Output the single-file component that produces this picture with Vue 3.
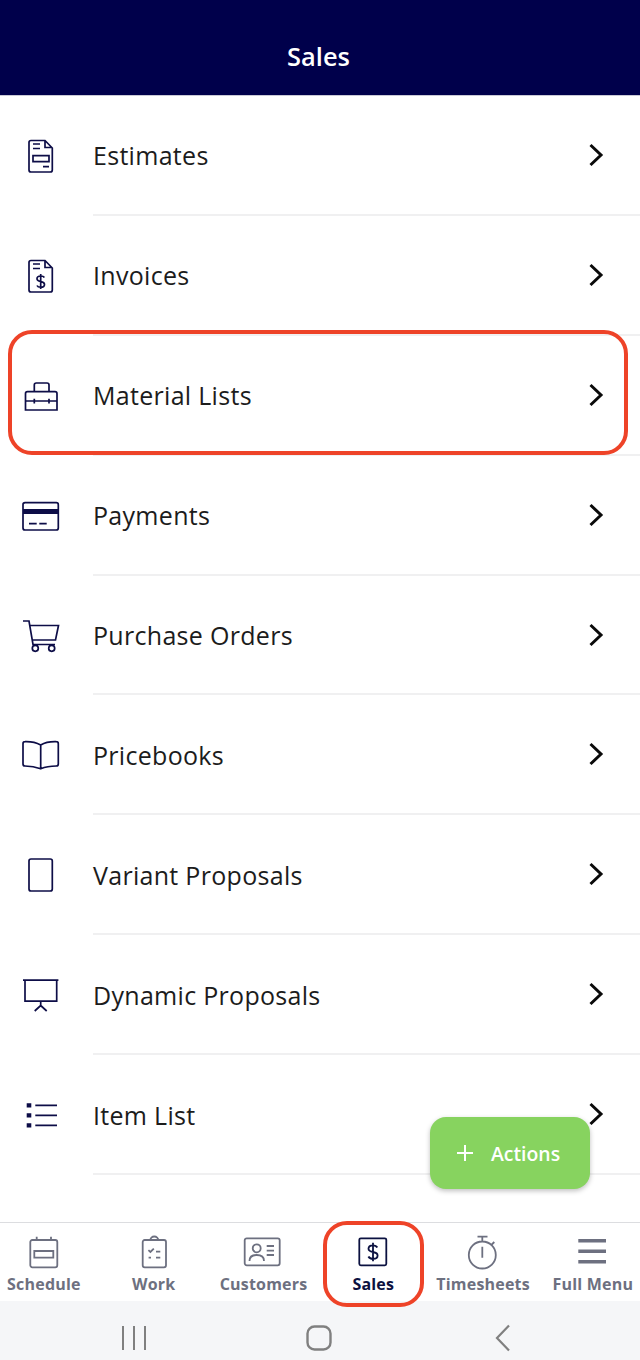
<script setup>
const rows = [
  { label: 'Estimates', d: 'M10 4.5H24L31.3 12V34a2 2 0 0 1-2 2H10a2 2 0 0 1-2-2V6.5a2 2 0 0 1 2-2zM24 4.5V11.5H31.3M12 8H19M12 12.5H19M12 19.7H28V25.7H12zM22 30.7H28' },
  { label: 'Invoices', d: 'M10 4.5H24L31.3 12V34a2 2 0 0 1-2 2H10a2 2 0 0 1-2-2V6.5a2 2 0 0 1 2-2zM24 4.5V11.5H31.3M12 8H19M12 12.5H19M23.4 21.5C22.8 20.5 21.5 20 19.7 20C17.5 20 16 21 16 22.8C16 24.6 17.6 25.2 19.7 25.6C21.9 26 23.5 26.6 23.5 28.4C23.5 30.2 22 31.2 19.7 31.2C17.8 31.2 16.5 30.6 16 29.5M19.7 18V33' },
  { label: 'Material Lists', d: 'M6.5 15.7H34a2 2 0 0 1 2 2V34H4.5V17.7a2 2 0 0 1 2-2zM13.3 15.7V9a2 2 0 0 1 2-2H26a2 2 0 0 1 2 2V15.7M4.5 25H36M13.3 22.7V27.5M28 22.7V27.5' },
  { label: 'Payments', d: 'M4 6.7H35.3a2 2 0 0 1 2 2V32a2 2 0 0 1-2 2H4a2 2 0 0 1-2-2V8.7a2 2 0 0 1 2-2zM8 27.7H15.7M18.3 27.7H25.7', fill: 'M2 13H37.3V18H2z' },
  { label: 'Purchase Orders', d: 'M2 5H8L12 28.5H34M9 9.5H37.5L34.5 24H11M17.3 32.3a3 3 0 1 1-6 0a3 3 0 1 1 6 0zM33.7 32.3a3 3 0 1 1-6 0a3 3 0 1 1 6 0z' },
  { label: 'Pricebooks', d: 'M19.7 10C15 7.5 9 6.5 4 6.7a2 2 0 0 0-2 2V29a2 2 0 0 0 2 2C10 31 15 32 19.7 33.8C24 32 30 31 35.3 31a2 2 0 0 0 2-2V8.7a2 2 0 0 0-2-2C30 6.5 24 7.5 19.7 10V33.8' },
  { label: 'Variant Proposals', d: 'M10 4H29.3a2 2 0 0 1 2 2V34a2 2 0 0 1-2 2H10a2 2 0 0 1-2-2V6a2 2 0 0 1 2-2z' },
  { label: 'Dynamic Proposals', d: 'M2 5.2H37.4M4 5.2V26.2H35.7V5.2M19.7 26.2V30.5M13.7 36L19.7 30.5L25.7 36' },
  { label: 'Item List', d: 'M14.3 10.4H36M14.3 20.4H36M14.3 30.4H36', fill: 'M5.7 8.2H10.3V12.6H5.7zM5.7 18.2H10.3V22.6H5.7zM5.7 28.2H10.3V32.6H5.7z' }
]
const tabs = [
  { label: 'Schedule', d: 'M10.3 7H33.3a2 2 0 0 1 2 2V32.3a2 2 0 0 1-2 2H10.3a2 2 0 0 1-2-2V9a2 2 0 0 1 2-2zM14.7 3.7V7M29 3.7V7M12.3 18H31.3V24.7H12.3z' },
  { label: 'Work', d: 'M12.7 7H32a2 2 0 0 1 2 2V32.3a2 2 0 0 1-2 2H12.7a2 2 0 0 1-2-2V9a2 2 0 0 1 2-2zM18.3 7.5a4 4 0 0 1 8 0M16.4 17.2L18.4 19L21.8 15.6M24 18.7H28.3M16.6 24.7H19M24 24.7H28.3' },
  { label: 'Customers', d: 'M5.7 5.3H36.7a2 2 0 0 1 2 2V30.3a2 2 0 0 1-2 2H5.7a2 2 0 0 1-2-2V7.3a2 2 0 0 1 2-2zM19.7 15.3a4 4 0 1 1-8 0a4 4 0 1 1 8 0zM8.5 28C8.5 23.5 11.5 22 15.7 22S23 23.5 23 28M25.7 13H33M25.7 17.7H33M25.7 22H33' },
  { label: 'Sales', active: true, d: 'M9.8 5.3H33.8a1.5 1.5 0 0 1 1.5 1.5V30.8a1.5 1.5 0 0 1-1.5 1.5H9.8a1.5 1.5 0 0 1-1.5-1.5V6.8a1.5 1.5 0 0 1 1.5-1.5zM26.3 14.5C25.5 13 24 12.3 22 12.3C19.3 12.3 17.5 13.6 17.5 15.7C17.5 18 19.5 18.5 22 19C24.6 19.5 26.6 20.2 26.6 22.4C26.6 24.6 24.7 25.8 22 25.8C19.8 25.8 18.1 25 17.4 23.5M22 9.8V28.3' },
  { label: 'Timesheets', d: 'M34.8 22a13.5 13.5 0 1 1-27 0a13.5 13.5 0 1 1 27 0zM16.5 3.7H26.5M21.3 3.7V8.5M21.3 13.7V24.7M30.8 11.5L33.3 9' },
  { label: 'Full Menu', bars: true, d: 'M7.3 7.7H35M7.3 18.2H35M7.3 28.7H35' }
]
</script>

<template>
  <div class="page">
    <header class="top">Sales</header>
    <main class="list">
      <div v-for="row in rows" :key="row.label" class="row">
        <svg class="icon" width="40" height="40" viewBox="0 0 40 40">
          <path :d="row.d" fill="none" stroke="#0d0d47" stroke-width="1.7" />
          <path v-if="row.fill" :d="row.fill" fill="#0d0d47" />
        </svg>
        <div class="row-body">
          <span class="row-label">{{ row.label }}</span>
          <svg class="chev" width="16" height="26" viewBox="0 0 16 26">
            <path d="M2.5 3L13 13L2.5 23" fill="none" stroke="#0a0a0a" stroke-width="3" />
          </svg>
        </div>
      </div>
    </main>
    <nav class="tabs">
      <div v-for="tab in tabs" :key="tab.label" class="tab" :class="{ active: tab.active }">
        <svg width="44" height="40" viewBox="0 0 44 40">
          <path :d="tab.d" fill="none" stroke="currentColor" :stroke-width="tab.bars ? 3.4 : 1.8" />
        </svg>
        <span>{{ tab.label }}</span>
      </div>
    </nav>
    <div class="sysbar">
      <div class="sys-cell">
        <svg width="26" height="26" viewBox="0 0 26 26"><path d="M2 1V25M13 1V25M24 1V25" stroke="#808080" stroke-width="2" fill="none" /></svg>
      </div>
      <div class="sys-cell">
        <svg width="26" height="26" viewBox="0 0 26 26"><rect x="1.5" y="1.5" width="23" height="23" rx="7" fill="none" stroke="#808080" stroke-width="2.4" /></svg>
      </div>
      <div class="sys-cell">
        <svg width="16" height="28" viewBox="0 0 16 28"><path d="M14 1.5L2 14L14 26.5" fill="none" stroke="#808080" stroke-width="2.2" /></svg>
      </div>
    </div>

    <button class="fab"><span class="plus"></span><span>Actions</span></button>
    <div class="mark mark-row"></div>
    <div class="mark mark-tab"></div>
  </div>
</template>

<style scoped>
.page {
  position: relative;
  width: 640px;
  height: 1360px;
  display: flex;
  flex-direction: column;
  overflow: hidden;
  background: #fff;
  font-family: "Open Sans", sans-serif;
}
.top {
  height: 95px;
  box-sizing: content-box;
  padding-right: 3px;
  border-bottom: 1px solid #c9c9d6;
  background: #00004b;
  color: #fff;
  font-size: 25.4px;
  font-weight: 600;
  line-height: 113px;
  text-align: center;
}
.list {
  flex: 1;
}
.row {
  height: 119.9px;
  display: flex;
  padding-left: 21px;
  box-sizing: border-box;
}
.icon {
  flex: none;
  align-self: center;
  margin-right: 32px;
}
.row-body {
  flex: 1;
  display: flex;
  align-items: center;
  justify-content: space-between;
  padding-right: 36px;
  border-bottom: 2px solid #f0f0f1;
}
.row-label {
  color: #1c1c1c;
  font-size: 25px;
  font-weight: 400;
  letter-spacing: 0.3px;
  position: relative;
  top: 0.5px;
}
.chev {
  display: block;
}
.tabs {
  height: 78px;
  display: flex;
  margin-left: -11px;
  border-top: 1px solid #dcdde0;
  background: #fff;
}
.tab {
  flex: 0 0 109.8px;
  display: flex;
  flex-direction: column;
  align-items: center;
  padding-top: 10px;
  color: #6d7080;
  font-size: 16px;
  font-weight: 700;
  letter-spacing: 0.2px;
  line-height: 22px;
  white-space: nowrap;
}
.tab svg {
  display: block;
}
.tab.active {
  color: #0b1140;
}
.sysbar {
  height: 59px;
  display: flex;
  align-items: center;
  padding-left: 42px;
  padding-top: 15px;
  box-sizing: border-box;
  background: #f5f6f8;
}
.sys-cell {
  flex: 0 0 184.5px;
  display: flex;
  justify-content: center;
}
.sys-cell svg {
  display: block;
}
.fab {
  position: absolute;
  left: 430px;
  top: 1117px;
  width: 160px;
  height: 72px;
  display: flex;
  align-items: center;
  gap: 18px;
  padding: 0 0 0 27px;
  border: 0;
  border-radius: 16px;
  background: #87d35f;
  box-shadow: 0 2px 5px rgba(0, 0, 0, 0.25);
  color: #fff;
  font-family: inherit;
  font-size: 19.4px;
  font-weight: 600;
}
.plus {
  width: 16px;
  height: 16px;
  background:
    linear-gradient(#fff, #fff) center / 16px 2px no-repeat,
    linear-gradient(#fff, #fff) center / 2px 16px no-repeat;
}
.mark {
  position: absolute;
  box-sizing: border-box;
  border: 4px solid #ee4328;
}
.mark-row {
  left: 8px;
  top: 330px;
  width: 620px;
  height: 125px;
  border-radius: 24px;
}
.mark-tab {
  left: 323px;
  top: 1221px;
  width: 101px;
  height: 86px;
  border-radius: 24px;
}
</style>
